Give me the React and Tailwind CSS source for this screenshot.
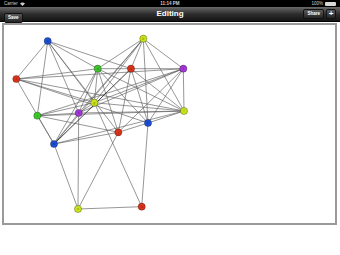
const nodes = {
  A: { x: 47.7, y: 41, c: '#1d4fd6', l: 'a' },
  B: { x: 143.3, y: 38.7, c: '#c9e21a', l: 'b' },
  C: { x: 16.3, y: 79, c: '#d8321a', l: 'c' },
  D: { x: 97.7, y: 68.7, c: '#3fc42c', l: 'd' },
  E: { x: 131, y: 68.7, c: '#d8321a', l: 'e' },
  F: { x: 183.3, y: 68.7, c: '#a336d8', l: 'f' },
  G: { x: 94.3, y: 102.7, c: '#c9e21a', l: 'g' },
  H: { x: 78.7, y: 113, c: '#a336d8', l: 'h' },
  I: { x: 37.3, y: 115.7, c: '#3fc42c', l: 'i' },
  J: { x: 118.3, y: 132.3, c: '#d8321a', l: 'j' },
  K: { x: 148, y: 123, c: '#1d4fd6', l: 'k' },
  L: { x: 184, y: 111, c: '#c9e21a', l: 'l' },
  M: { x: 54, y: 144, c: '#1d4fd6', l: 'm' },
  N: { x: 78, y: 209, c: '#c9e21a', l: 'n' },
  O: { x: 141.7, y: 206.7, c: '#d8321a', l: 'o' },
}

// edges read off the screenshot, roughly
const edges = [
  'AC', 'AI', 'AD', 'AE', 'AG', 'AH', 'AJ',
  'BD', 'BE', 'BF', 'BK', 'BG', 'BH', 'BM', 'BL',
  'CD', 'CG', 'CK', 'CM', 'CF', 'CL',
  'DE', 'DG', 'DH', 'DJ', 'DK', 'DL', 'DM',
  'EF', 'EJ', 'EL', 'EK',
  'FH', 'FL', 'FK', 'FG', 'FI', 'FJ',
  'GH', 'GL', 'GI', 'GO',
  'HI', 'HL', 'HN', 'HM',
  'IM', 'IJ', 'IL',
  'JK', 'JM',
  'KL', 'KO',
  'ML', 'MN', 'NO', 'NJ',
]

const Graph = () => (
  <svg className="block w-full h-full" viewBox="4 25 331 198">
    {edges.map((e) => {
      const a = nodes[e[0]]
      const b = nodes[e[1]]
      return (
        <line key={e} x1={a.x} y1={a.y} x2={b.x} y2={b.y} stroke="#5e5e5e" strokeWidth="0.65" />
      )
    })}
    <line x1={nodes.E.x} y1={nodes.E.y} x2={nodes.M.x} y2={nodes.M.y} stroke="#2a2a2a" strokeWidth="0.9" />
    {Object.entries(nodes).map(([k, n]) => (
      <g key={k}>
        <circle cx={n.x} cy={n.y} r="3.6" fill={n.c} stroke="rgba(0,0,0,0.45)" strokeWidth="0.6" />
        <text x={n.x} y={n.y + 1.3} textAnchor="middle" fontSize="3.6" fill="rgba(0,0,0,0.45)" fontFamily="Liberation Sans, sans-serif">
          {n.l}
        </text>
      </g>
    ))}
  </svg>
)

export default function App() {
  return (
    <div className="w-[340px] h-[255px] bg-white font-['Liberation_Sans',sans-serif] overflow-hidden">
      {/* status bar */}
      <div className="h-[7px] bg-black text-[#cfcfcf] text-[4.5px] leading-[7px] flex items-center justify-between px-[4px]">
        <div className="flex items-center gap-[2px] w-[60px]">
          <span>Carrier</span>
          <svg width="5" height="4" viewBox="0 0 10 8">
            <path d="M0 3 Q5 -1 10 3 L5 8 Z" fill="#cfcfcf" />
          </svg>
        </div>
        <span className="font-bold">11:14 PM</span>
        <div className="flex items-center justify-end gap-[2px] w-[60px]">
          <span>100%</span>
          <div className="w-[11px] h-[4px] bg-[#d8d8d8] rounded-[1px]" />
        </div>
      </div>
      {/* nav bar */}
      <div className="h-[15px] bg-gradient-to-b from-[#6a6a6a] via-[#2e2e2e] to-[#141414] border-b border-black flex items-center justify-between px-[4px]">
        <div className="w-[60px]">
          <button className="h-[10px] px-[3px] rounded-[2px] bg-gradient-to-b from-[#5a5a5a] to-[#262626] border border-[#111] text-white text-[4.5px] font-bold leading-none">
            Save
          </button>
        </div>
        <span className="text-white text-[8px] font-bold leading-none">Editing</span>
        <div className="w-[60px] flex justify-end items-center gap-[2px]">
          <button className="h-[10px] px-[3px] rounded-[2px] bg-gradient-to-b from-[#5a5a5a] to-[#262626] border border-[#111] text-white text-[4.5px] font-bold leading-none">
            Share
          </button>
          <button className="h-[10px] w-[10px] rounded-[2px] bg-gradient-to-b from-[#5a5a5a] to-[#262626] border border-[#111] text-white text-[8px] font-bold leading-none flex items-center justify-center">
            +
          </button>
        </div>
      </div>
      {/* canvas */}
      <div className="pt-[1px] pl-[2px]">
        <div className="w-[335px] h-[202px] border-2 border-[#9a9a9a] bg-white">
          <Graph />
        </div>
      </div>
    </div>
  )
}
